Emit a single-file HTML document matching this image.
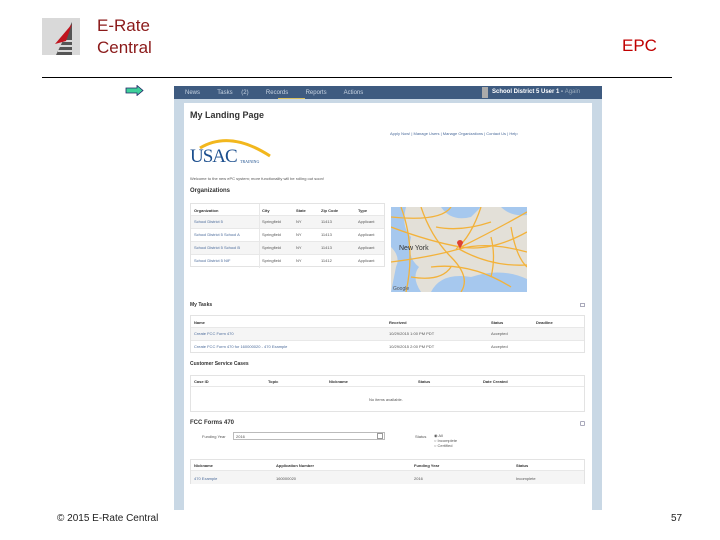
<!DOCTYPE html>
<html><head><style>
*{margin:0;padding:0;box-sizing:border-box}
body{width:720px;height:540px;background:#fff;position:relative;overflow:hidden;font-family:"Liberation Sans",sans-serif}
.a{position:absolute}
.t{font-size:4px;color:#555;white-space:nowrap}
.l{color:#4a6a9a}
.h{font-weight:bold;color:#333}
.tbl{position:absolute;border:1px solid #e3e3e3;background:#fff}
.row{position:absolute;left:0;right:0;border-top:1px solid #e8e8e8}
.m{line-height:13px}
</style></head><body>
<!-- logo -->
<div class="a" style="left:42px;top:18px;width:38px;height:37px;background:#d9d9d9"></div>
<svg class="a" style="left:42px;top:18px" width="38" height="37" viewBox="0 0 38 37">
<polygon points="30,4 30,37 14,37" fill="#555"/>
<rect x="20" y="22" width="10" height="2" fill="#d9d9d9"/>
<rect x="18" y="27" width="12" height="2" fill="#d9d9d9"/>
<rect x="16" y="32" width="14" height="2" fill="#d9d9d9"/>
<polygon points="30,6 13,26 24,23" fill="#c0141e"/>
</svg>
<div class="a" style="left:97px;top:15px;color:#8b1a1a;font-size:17px;line-height:22px">E-Rate<br>Central</div>
<div class="a" style="left:622px;top:36px;color:#c00000;font-size:17px">EPC</div>
<div class="a" style="left:42px;top:77px;width:630px;height:1px;background:#000"></div>
<svg class="a" style="left:125px;top:85px" width="20" height="11"><polygon points="1,3 12,3 12,0.5 18,5.5 12,10.5 12,8 1,8" fill="#3ed09a" stroke="#226" stroke-width="0.8"/></svg>
<div class="a" style="left:57px;top:513px;font-size:10px;color:#222">© 2015 E-Rate Central</div>
<div class="a" style="left:671px;top:513px;font-size:10px;color:#222">57</div>

<!-- screenshot -->
<div class="a" style="left:174px;top:86px;width:428px;height:424px;background:#c9d8e5"></div>
<div class="a" style="left:174px;top:86px;width:428px;height:13px;background:#3e5b80"></div>
<div class="a t" style="left:185px;top:90px;color:#c8d4e2;font-size:6px;word-spacing:7px">News&nbsp; Tasks (2)&nbsp; Records&nbsp; Reports&nbsp; Actions</div>
<div class="a" style="left:278px;top:98px;width:27px;height:1px;background:#d8c060"></div>
<div class="a" style="left:482px;top:87px;width:6px;height:11px;background:#aaa"></div>
<div class="a" style="left:492px;top:89px;font-size:6px;font-weight:bold;color:#fff">School District 5 User 1 - <span style="font-weight:normal;color:#9ab">Again</span></div>
<div class="a" style="left:184px;top:103px;width:408px;height:407px;background:#fff"></div>

<div class="a h" style="left:190px;top:110px;font-size:9px">My Landing Page</div>
<div class="a t l" style="left:390px;top:131px">Apply Now! | Manage Users | Manage Organizations | Contact Us | Help</div>
<svg class="a" style="left:190px;top:134px" width="86" height="32">
<path d="M10,14 Q40,-4 80,22" stroke="#f2b71d" stroke-width="3" fill="none"/>
<text x="0" y="28" font-family="Liberation Serif" font-size="19" fill="#1c4f8e" letter-spacing="-1">USAC</text>
<text x="50" y="29" font-family="Liberation Serif" font-size="4" fill="#1c4f8e">TRAINING</text>
</svg>
<div class="a t" style="left:190px;top:176px">Welcome to the new ePC system; more functionality will be rolling out soon!</div>
<div class="a h" style="left:190px;top:188px;font-size:6px">Organizations</div>

<div class="tbl" style="left:190px;top:203px;width:195px;height:64px">
<div class="a t h" style="left:3px;top:4px;font-weight:bold">Organization</div>
<div class="a t h" style="left:71px;top:4px">City</div>
<div class="a t h" style="left:105px;top:4px">State</div>
<div class="a t h" style="left:130px;top:4px">Zip Code</div>
<div class="a t h" style="left:167px;top:4px">Type</div>
<div class="row" style="top:11px;height:13px;background:#f5f5f5"></div>
<div class="row" style="top:37px;height:13px;background:#f5f5f5"></div>
<div class="row" style="top:24px"></div><div class="row" style="top:50px"></div>
<div class="a t l m" style="left:3px;top:11px">School District 5<br>School District 5 School A<br>School District 5 School B<br>School District 5 NIF</div>
<div class="a t m" style="left:71px;top:11px">Springfield<br>Springfield<br>Springfield<br>Springfield</div>
<div class="a t m" style="left:105px;top:11px">NY<br>NY<br>NY<br>NY</div>
<div class="a t m" style="left:130px;top:11px">11413<br>11413<br>11413<br>11412</div>
<div class="a t m" style="left:167px;top:11px">Applicant<br>Applicant<br>Applicant<br>Applicant</div>
<div class="a" style="left:68px;top:0;width:1px;height:64px;background:#e8e8e8"></div>
</div>

<svg class="a" style="left:391px;top:207px" width="136" height="85">
<rect width="136" height="85" fill="#e3e0d8"/>
<path d="M0,40 Q10,50 5,60 L0,85 L30,85 Q20,70 28,60 Q15,50 20,30 Q10,20 15,0 L0,0Z" fill="#a6c8ee"/>
<path d="M50,0 Q60,15 80,10 L90,0Z" fill="#a6c8ee"/>
<path d="M40,85 Q50,65 80,70 Q110,60 136,72 L136,85Z" fill="#a6c8ee"/>
<path d="M110,0 Q120,10 136,8 L136,0Z" fill="#a6c8ee"/>
<g stroke="#f3b23a" stroke-width="1.3" fill="none">
<path d="M0,20 Q40,35 70,40 T136,25"/><path d="M0,55 Q40,50 68,42 T136,45"/>
<path d="M30,0 Q40,30 60,50 T70,85"/><path d="M90,0 Q80,30 65,42"/>
<path d="M68,42 Q100,60 136,58"/><path d="M10,0 Q25,40 15,85"/>
<path d="M70,40 Q110,20 136,5"/><path d="M100,30 Q105,50 100,70"/>
<path d="M0,10 Q50,15 60,0"/><path d="M40,60 Q80,55 120,80"/><path d="M120,20 Q125,50 136,60"/>
<path d="M20,70 Q50,75 60,60"/><path d="M45,20 Q70,25 100,15"/>
</g>
<text x="8" y="43" font-size="7" fill="#333" font-family="Liberation Sans">New York</text>
<path d="M66,36 a3,3 0 1,1 6,0 l-3,6z" fill="#e04030"/>
<text x="2" y="83" font-size="5" fill="#555" font-family="Liberation Sans">Google</text>
</svg>

<div class="a h" style="left:190px;top:302px;font-size:5px">My Tasks</div>
<div class="a" style="left:580px;top:303px;width:5px;height:4px;border:1px solid #aab"></div>
<div class="tbl" style="left:190px;top:315px;width:395px;height:38px">
<div class="a t h" style="left:3px;top:4px">Name</div><div class="a t h" style="left:198px;top:4px">Received</div><div class="a t h" style="left:300px;top:4px">Status</div><div class="a t h" style="left:345px;top:4px">Deadline</div>
<div class="row" style="top:11px;height:13px;background:#f5f5f5"></div><div class="row" style="top:24px"></div>
<div class="a t l m" style="left:3px;top:11px">Create FCC Form 470<br>Create FCC Form 470 for 160000020 - 470 Example</div>
<div class="a t m" style="left:198px;top:11px">10/29/2015 1:00 PM PDT<br>10/29/2015 2:00 PM PDT</div>
<div class="a t m" style="left:300px;top:11px">Accepted<br>Accepted</div>
</div>

<div class="a h" style="left:190px;top:361px;font-size:5px">Customer Service Cases</div>
<div class="tbl" style="left:190px;top:375px;width:395px;height:37px">
<div class="a t h" style="left:3px;top:3px">Case ID</div><div class="a t h" style="left:77px;top:3px">Topic</div><div class="a t h" style="left:138px;top:3px">Nickname</div><div class="a t h" style="left:227px;top:3px">Status</div><div class="a t h" style="left:292px;top:3px">Date Created</div>
<div class="row" style="top:10px"></div>
<div class="a t" style="left:178px;top:21px">No items available.</div>
</div>

<div class="a h" style="left:190px;top:420px;font-size:6px">FCC Forms 470</div>
<div class="a" style="left:580px;top:421px;width:5px;height:5px;border:1px solid #aab;border-radius:1px"></div>
<div class="a t" style="left:202px;top:434px">Funding Year</div>
<div class="a" style="left:233px;top:432px;width:152px;height:8px;border:1px solid #bbb"></div>
<div class="a t" style="left:236px;top:434px">2016</div>
<div class="a" style="left:377px;top:433px;width:6px;height:6px;border:1px solid #999"></div>
<div class="a t" style="left:415px;top:434px">Status</div>
<div class="a t" style="left:434px;top:433px;line-height:5px">◉ All<br>○ Incomplete<br>○ Certified</div>
<div class="tbl" style="left:190px;top:459px;width:395px;height:25px">
<div class="a t h" style="left:3px;top:3px">Nickname</div><div class="a t h" style="left:85px;top:3px">Application Number</div><div class="a t h" style="left:223px;top:3px">Funding Year</div><div class="a t h" style="left:325px;top:3px">Status</div>
<div class="row" style="top:10px;height:14px;background:#f5f5f5"></div>
<div class="a t l" style="left:3px;top:16px">470 Example</div><div class="a t" style="left:85px;top:16px">160000020</div><div class="a t" style="left:223px;top:16px">2016</div><div class="a t" style="left:325px;top:16px">Incomplete</div>
</div>
</body></html>
